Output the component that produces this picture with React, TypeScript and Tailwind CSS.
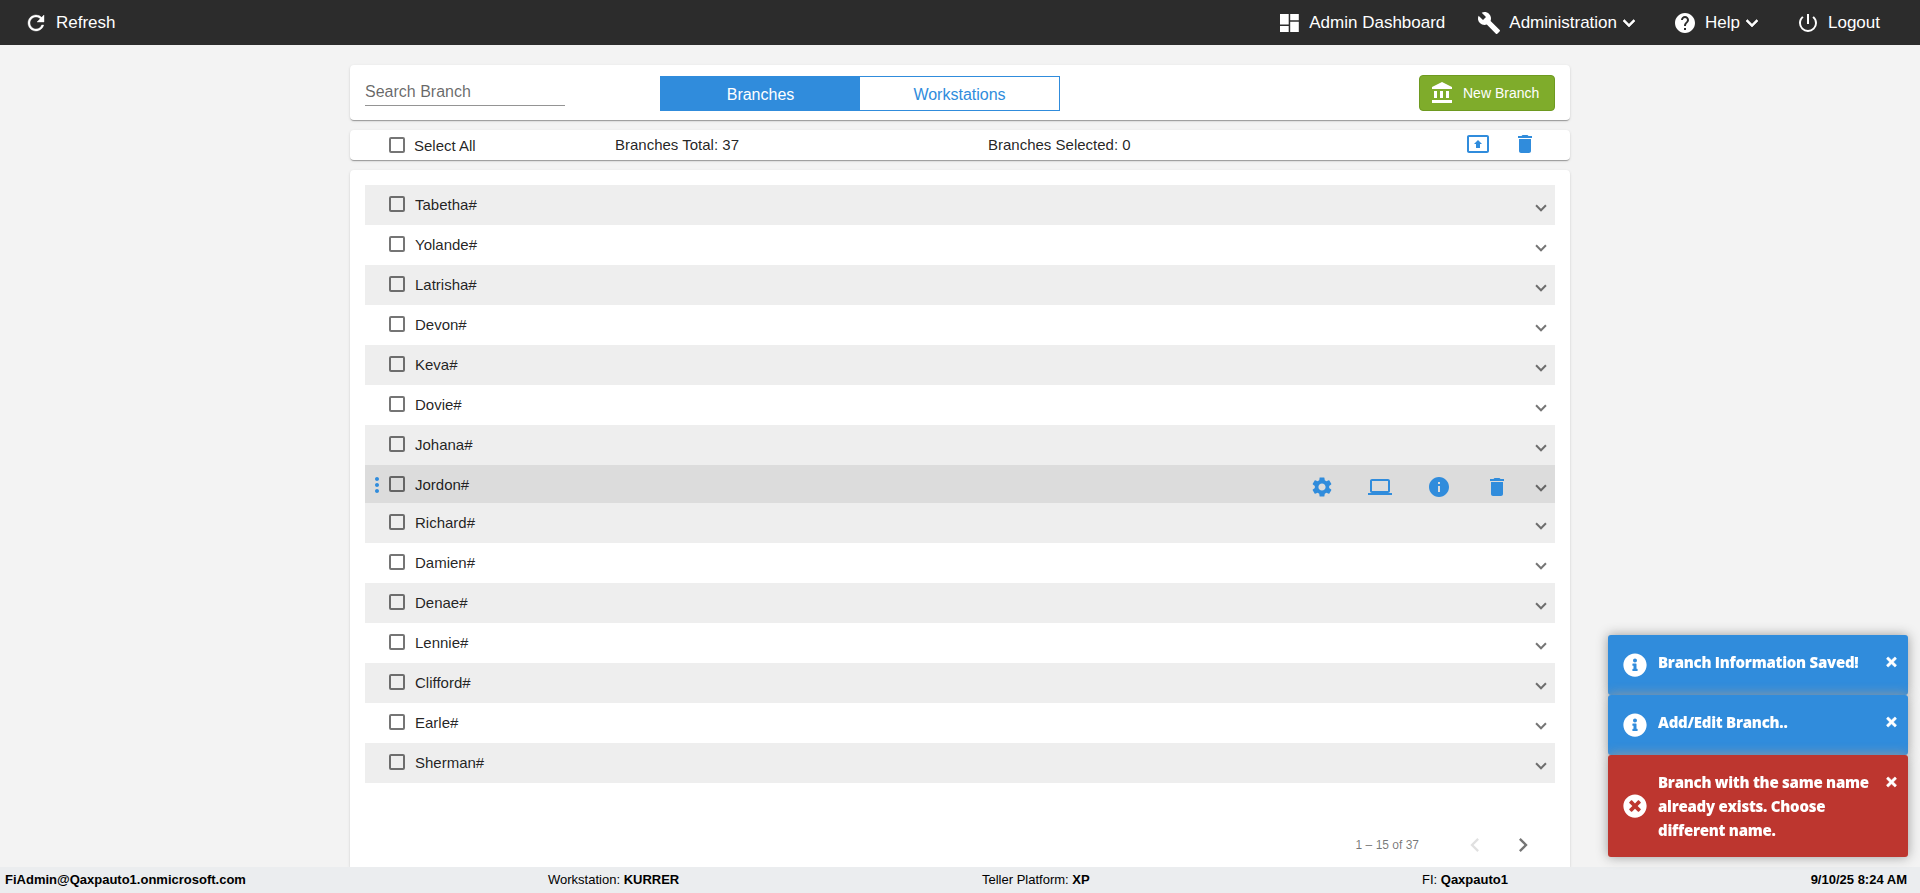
import { useState } from 'react';
import type { ReactNode } from 'react';
import { FaInfoCircle, FaTimes, FaTimesCircle } from 'react-icons/fa';
import {
  MdBuild,
  MdChevronLeft,
  MdChevronRight,
  MdComputer,
  MdDelete,
  MdHelp,
  MdInfo,
  MdMoreVert,
  MdPresentToAll,
  MdSettings,
} from 'react-icons/md';

const branches = [
  'Tabetha#', 'Yolande#', 'Latrisha#', 'Devon#', 'Keva#', 'Dovie#', 'Johana#', 'Jordon#',
  'Richard#', 'Damien#', 'Denae#', 'Lennie#', 'Clifford#', 'Earle#', 'Sherman#',
];

const cardShadow = 'shadow-[0_2px_1px_-1px_rgba(0,0,0,0.2),0_1px_1px_0_rgba(0,0,0,0.14),0_1px_3px_0_rgba(0,0,0,0.12)]';

const iconPaths = {
  refresh: 'M17.65 6.35A7.958 7.958 0 0 0 12 4c-4.42 0-7.99 3.58-7.99 8s3.57 8 7.99 8c3.73 0 6.84-2.55 7.73-6h-2.08A5.99 5.99 0 0 1 12 18c-3.31 0-6-2.69-6-6s2.69-6 6-6c1.66 0 3.14.69 4.22 1.78L13 11h7V4l-2.35 2.35z',
  dashboard: 'M3 3h8.7v10.6H3zM3 15h8.7v6H3zM13.2 3h8.6v6.2h-8.6zM13.2 10.8h8.6V21h-8.6z',
  bank: 'M4 10v7h3v-7H4zm6 0v7h3v-7h-3zM2 22h20v-3H2v3zm14-12v7h3v-7h-3zM12 1 2 6v2h20V6L12 1z',
  power: 'M13 3h-2v10h2V3zm4.83 2.17-1.42 1.42A6.92 6.92 0 0 1 19 12c0 3.87-3.13 7-7 7s-7-3.13-7-7c0-2.19 1.01-4.14 2.58-5.42L6.17 5.17A8.932 8.932 0 0 0 3 12a9 9 0 0 0 18 0c0-2.74-1.23-5.18-3.17-6.83z',
  chevron: 'M7.41 8.59 12 13.17l4.59-4.58L18 10l-6 6-6-6 1.41-1.41z',
};

interface IconProps {
  name: keyof typeof iconPaths;
  className?: string;
}

function Icon({ name, className = '' }: IconProps) {
  return (
    <svg viewBox="0 0 24 24" fill="currentColor" className={`size-6 ${className}`}>
      <path d={iconPaths[name]} />
    </svg>
  );
}

interface CheckboxProps {
  checked: boolean;
  label: string;
  onChange: () => void;
}

function Checkbox({ checked, label, onChange }: CheckboxProps) {
  return (
    <button
      type="button"
      role="checkbox"
      aria-checked={checked}
      aria-label={label}
      onClick={onChange}
      className={`size-4 shrink-0 rounded-[2px] border-2 ${checked ? 'border-[#308cdc] bg-[#308cdc]' : 'border-black/54'}`}
    />
  );
}

interface NavItemProps {
  icon: ReactNode;
  label: string;
  menu?: boolean;
  className?: string;
}

function NavItem({ icon, label, menu, className = '' }: NavItemProps) {
  return (
    <button type="button" className={`flex items-center gap-2 ${className}`}>
      {icon}
      <span className="flex items-center leading-6">
        <span>{label}</span>
        {menu && <Icon name="chevron" className="-mr-1.5 stroke-current [stroke-width:0.6]" />}
      </span>
    </button>
  );
}

interface BranchRowProps {
  name: string;
  striped: boolean;
  active: boolean;
  checked: boolean;
  onToggle: () => void;
}

function BranchRow({ name, striped, active, checked, onToggle }: BranchRowProps) {
  const background = active ? 'h-[38px] bg-[#dcdcdc]' : striped ? 'h-10 bg-[#eee]' : 'h-10 bg-white';

  return (
    <li className={`flex items-start pr-[10px] ${background}`}>
      <div className="flex h-10 w-6 items-center justify-end text-[#308cdc]">
        {active && <MdMoreVert className="size-6 shrink-0" />}
      </div>
      <div className="mt-[11px] flex">
        <Checkbox checked={checked} label={name} onChange={onToggle} />
      </div>
      <span className="ml-[10px] flex-1 text-[15px] leading-[39px]">{name}</span>
      {active && (
        <div className="mr-[28px] mt-[10px] flex gap-[34.4px] text-[#308cdc]">
          <MdSettings className="size-6" />
          <MdComputer className="size-6" />
          <MdInfo className="size-6" />
          <MdDelete className="size-6" />
        </div>
      )}
      <span className="mt-[17px] size-2 rotate-45 border-b-2 border-r-2 border-black/54" />
    </li>
  );
}

interface ToastProps {
  message: string;
  error?: boolean;
}

function Toast({ message, error }: ToastProps) {
  const StatusIcon = error ? FaTimesCircle : FaInfoCircle;

  return (
    <div className={`flex rounded-[3px] py-[15px] pl-[15px] pr-[11px] text-white shadow-[0_0_12px_#999] ${error ? 'bg-[#bd362f]' : 'bg-[#308cdc]'}`}>
      <StatusIcon className="size-6 shrink-0 self-center" />
      <p
        className={`ml-[11px] w-[218px] font-['Open_Sans','Noto_Sans',sans-serif] text-[15px] font-extrabold leading-6 tracking-[-0.25px] ${error ? '' : 'pb-1.5'}`}
      >
        {message}
      </p>
      <button type="button" aria-label="Close" className="ml-auto mt-[5px] self-start">
        <FaTimes className="h-[14px] w-[11px] stroke-current [stroke-width:24]" />
      </button>
    </div>
  );
}

export default function App() {
  const [selected, setSelected] = useState<string[]>([]);
  const [search, setSearch] = useState('');

  function toggle(name: string) {
    setSelected((prev) => (prev.includes(name) ? prev.filter((n) => n !== name) : [...prev, name]));
  }

  const allSelected = selected.length === branches.length;

  return (
    <div className="flex h-screen flex-col overflow-hidden bg-[#f3f3f3] font-['Liberation_Sans',Arial,sans-serif] text-black/87">
      <header className="flex h-[45px] shrink-0 items-center bg-[#2c2c2c] pl-6 pr-10 pt-px text-[17px] text-white">
        <NavItem icon={<Icon name="refresh" className="stroke-current [stroke-width:0.4]" />} label="Refresh" />
        <nav className="ml-auto flex items-center">
          <NavItem icon={<Icon name="dashboard" />} label="Admin Dashboard" />
          <NavItem icon={<MdBuild className="size-6" />} label="Administration" menu className="ml-8" />
          <NavItem icon={<MdHelp className="size-6" />} label="Help" menu className="ml-[38px]" />
          <NavItem icon={<Icon name="power" />} label="Logout" className="ml-[38px]" />
        </nav>
      </header>

      <main className="mx-auto flex min-h-0 w-[1220px] flex-1 flex-col gap-[10px] pt-5">
        <section className={`flex h-[55px] shrink-0 items-start rounded bg-white px-[15px] ${cardShadow}`}>
          <input
            value={search}
            onChange={(event) => setSearch(event.target.value)}
            placeholder="Search Branch"
            className="mt-[11px] h-[30px] w-[200px] border-b border-[#949494] pt-0.5 text-base outline-none placeholder:text-black/60"
          />
          <div className="ml-[95px] mt-[11px] flex h-[35px] w-[400px] border border-[#308cdc] text-base">
            <button type="button" className="w-[199px] bg-[#308cdc] pt-0.5 text-white">Branches</button>
            <button type="button" className="flex-1 pt-0.5 text-[#308cdc]">Workstations</button>
          </div>
          <button
            type="button"
            className="ml-auto mt-[10px] flex h-9 w-[136px] items-center gap-[9px] rounded border border-[#6e9a20] bg-[#7fac2b] pl-[10px] text-sm text-white"
          >
            <Icon name="bank" />
            New Branch
          </button>
        </section>

        <section className={`flex h-[30px] shrink-0 items-center rounded bg-white pl-[39px] pr-[33px] text-[15px] ${cardShadow}`}>
          <div className="flex w-[226px] items-center gap-[9px]">
            <Checkbox checked={allSelected} label="Select All" onChange={() => setSelected(allSelected ? [] : branches)} />
            <span className="pt-0.5">Select All</span>
          </div>
          <span className="w-[373px]">Branches Total: 37</span>
          <span>Branches Selected: {selected.length}</span>
          <div className="ml-auto flex gap-[23px] pb-0.5 text-[#308cdc]">
            <MdPresentToAll className="size-6" />
            <MdDelete className="size-6" />
          </div>
        </section>

        <section className={`min-h-0 flex-1 overflow-hidden rounded-t bg-white px-[15px] pt-[15px] ${cardShadow}`}>
          <ul>
            {branches.map((name, index) => (
              <BranchRow
                key={name}
                name={name}
                striped={index % 2 === 0}
                active={name === 'Jordon#'}
                checked={selected.includes(name)}
                onToggle={() => toggle(name)}
              />
            ))}
          </ul>
          <div className="mt-12 flex items-center justify-end pr-[18px] text-xs text-black/54">
            <span>1 – 15 of 37</span>
            <MdChevronLeft className="ml-[42px] size-7 text-black/12" />
            <MdChevronRight className="ml-5 size-7" />
          </div>
        </section>
      </main>

      <footer className="relative flex h-[26px] shrink-0 items-center bg-[#ebedef] px-[5px] pb-px text-[13px] text-black">
        <b className="w-[543px]">FiAdmin@Qaxpauto1.onmicrosoft.com</b>
        <span className="w-[434px]">Workstation: <b>KURRER</b></span>
        <span className="w-[440px]">Teller Platform: <b>XP</b></span>
        <span>FI: <b>Qaxpauto1</b></span>
        <b className="ml-auto mr-2">9/10/25 8:24 AM</b>
      </footer>

      <div className="fixed bottom-9 right-3 w-[300px]">
        <Toast message="Branch Information Saved!" />
        <Toast message="Add/Edit Branch.." />
        <Toast error message="Branch with the same name already exists. Choose different name." />
      </div>
    </div>
  );
}
